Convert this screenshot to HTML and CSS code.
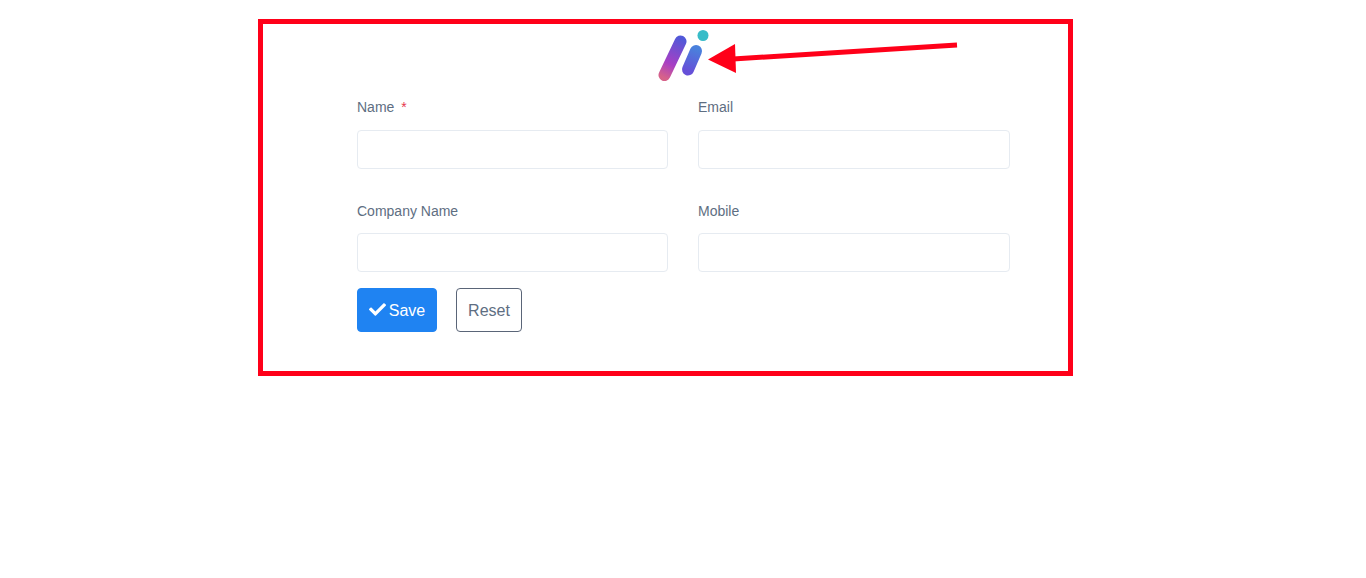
FILE: index.html
```html
<!DOCTYPE html>
<html lang="en">
<head>
    <meta charset="UTF-8">
    <meta name="viewport" content="width=device-width, initial-scale=1.0">
    <title>Contact Form</title>
    <link rel="stylesheet" href="styles.css">
</head>
<body>
    <div class="frame">
        <svg class="logo" width="52" height="52" viewBox="0 0 52 52" aria-label="Logo">
            <defs>
                <linearGradient id="barLong" gradientUnits="userSpaceOnUse" x1="24" y1="10" x2="5" y2="48">
                    <stop offset="0" stop-color="#5158d8"/>
                    <stop offset="0.65" stop-color="#a83fc4"/>
                    <stop offset="1" stop-color="#d6628a"/>
                </linearGradient>
                <linearGradient id="barShort" gradientUnits="userSpaceOnUse" x1="38" y1="20" x2="30" y2="42">
                    <stop offset="0" stop-color="#4a80dc"/>
                    <stop offset="1" stop-color="#6650d8"/>
                </linearGradient>
            </defs>
            <line class="logo-bar" x1="22.5" y1="12.5" x2="6.5" y2="46" stroke="url(#barLong)"/>
            <line class="logo-bar" x1="38" y1="22" x2="30" y2="40.5" stroke="url(#barShort)"/>
            <circle cx="45" cy="6.5" r="5.5" fill="#38bcc8"/>
        </svg>
        <form class="form-grid">
            <div class="field">
                <label class="field-label">Name <span class="required">*</span></label>
                <input class="field-input" type="text">
            </div>
            <div class="field">
                <label class="field-label">Email</label>
                <input class="field-input" type="text">
            </div>
            <div class="field">
                <label class="field-label">Company Name</label>
                <input class="field-input" type="text">
            </div>
            <div class="field">
                <label class="field-label">Mobile</label>
                <input class="field-input" type="text">
            </div>
            <div class="actions">
                <button class="btn btn-save" type="button">
                    <svg width="17" height="17" viewBox="0 0 512 512"><path fill="#fff" d="M173.898 439.404l-166.4-166.4c-9.997-9.997-9.997-26.206 0-36.204l36.203-36.204c9.997-9.998 26.207-9.998 36.204 0L192 312.69 432.095 72.596c9.997-9.997 26.207-9.997 36.204 0l36.203 36.204c9.997 9.997 9.997 26.206 0 36.204l-294.4 294.401c-9.998 9.997-26.207 9.997-36.204-.001z"/></svg>
                    <span class="btn-text">Save</span>
                </button>
                <button class="btn btn-reset" type="reset"><span class="btn-text">Reset</span></button>
            </div>
        </form>
    </div>
    <svg class="arrow" width="260" height="40" viewBox="0 0 260 40">
        <line x1="254" y1="12" x2="30" y2="26" stroke="#ff0019" stroke-width="5"/>
        <polygon points="5,26.5 32,11 33,40" fill="#ff0019"/>
    </svg>
</body>
</html>
```

FILE: styles.css
```css
body {
  margin: 0;
  background: #fff;
  font-family: "Liberation Sans", Arial, sans-serif;
  min-height: 100vh;
  position: relative;
}

.frame {
  box-sizing: border-box;
  width: 815px;
  height: 357px;
  margin: 0 0 0 258px;
  position: relative;
  top: 19px;
  border: 5px solid #ff0019;
  padding: 5px 58px 0 94px;
}

.logo {
  display: block;
  margin: 0 auto 16.3px;
}

.logo-bar {
  stroke-width: 12;
  stroke-linecap: round;
}

.form-grid {
  display: grid;
  grid-template-columns: 311px 312px;
  column-gap: 30px;
  row-gap: 31.7px;
}

.field {
  display: flex;
  flex-direction: column;
}

.field-label {
  font-size: 14px;
  line-height: 21px;
  color: #5e6e82;
  margin-bottom: 11.7px;
}

.required {
  color: #e6374f;
  margin-left: 3px;
}

.field-input {
  box-sizing: border-box;
  height: 39px;
  width: 100%;
  border: 1px solid #e6ebf1;
  border-radius: 4px;
  background: #fff;
  padding: 0 12px;
}

.actions {
  grid-column: 1 / -1;
  display: flex;
  gap: 19px;
  margin-top: -16.1px;
}

.btn {
  box-sizing: border-box;
  height: 44px;
  border-radius: 4px;
  font-family: inherit;
  font-size: 16px;
  display: flex;
  align-items: center;
  justify-content: center;
  gap: 3px;
}

.btn-text {
  padding-top: 2px;
}

.btn-save {
  width: 80px;
  background: #1f83f2;
  border: 1px solid #1f83f2;
  color: #fff;
}

.btn-reset {
  width: 66px;
  background: #fff;
  border: 1px solid #5a6578;
  color: #5e6e82;
}

.arrow {
  position: absolute;
  left: 703px;
  top: 33px;
}
```
